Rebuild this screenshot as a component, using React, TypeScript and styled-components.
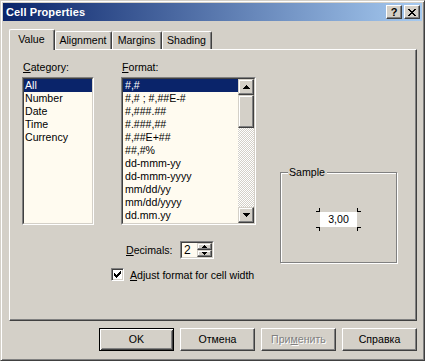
import React from "react";
import styled, { createGlobalStyle, css } from "styled-components";

const C = {
  face: "#d4d0c8",
  light: "#ffffff",
  shadow: "#808080",
  dark: "#404040",
  window: "#fffbf0",
  select: "#0a246a",
};

const GlobalStyle = createGlobalStyle`
  html, body { margin: 0; padding: 0; background: ${C.face}; }
  body {
    font-family: "Liberation Sans", Arial, sans-serif;
    font-size: 10.6px;
    color: #000;
  }
  * { box-sizing: border-box; }
`;

const raised = css`
  border: 1px solid;
  border-color: ${C.light} ${C.dark} ${C.dark} ${C.light};
  box-shadow: inset -1px -1px ${C.shadow}, inset 1px 1px ${C.face};
  background: ${C.face};
`;

const raisedSoft = css`
  border: 1px solid;
  border-color: ${C.face} ${C.dark} ${C.dark} ${C.face};
  box-shadow: inset -1px -1px ${C.shadow}, inset 1px 1px ${C.light};
  background: ${C.face};
`;

/* pixel glyphs */
const Pixels: React.FC<{ rows: string[]; color?: string }> = ({ rows, color = "#000" }) => (
  <svg
    width={rows[0].length}
    height={rows.length}
    viewBox={`0 0 ${rows[0].length} ${rows.length}`}
    shapeRendering="crispEdges"
    style={{ display: "block" }}
  >
    {rows.map((r, y) =>
      r.split("").map((ch, x) => (ch === "x" ? <rect key={`${x}-${y}`} x={x} y={y} width={1} height={1} fill={color} /> : null))
    )}
  </svg>
);

const closeGlyph = ["xx....xx", ".xx..xx.", "..xxxx..", "...xx...", "..xxxx..", ".xx..xx.", "xx....xx"];
const upGlyph = ["...x...", "..xxx..", ".xxxxx.", "xxxxxxx"];
const downGlyph = [...upGlyph].reverse();
const spinUp = ["..x..", ".xxx.", "xxxxx"];
const spinDown = [...spinUp].reverse();
const checkGlyph = ["......x", ".....xx", "x...xxx", "xx.xxx.", "xxxxx..", ".xxx...", "..x...."];

/* window frame */
const Window = styled.div`
  width: 425px;
  height: 361px;
  background: ${C.face};
  border: 1px solid;
  border-color: ${C.face} ${C.dark} ${C.dark} ${C.face};
  box-shadow: inset 1px 1px ${C.light}, inset -1px -1px ${C.shadow};
  padding: 2px;
  display: flex;
  flex-direction: column;
`;

const TitleBar = styled.div`
  height: 18px;
  background: linear-gradient(to right, ${C.select}, #a6caf0);
  display: flex;
  align-items: center;
  padding: 0 2px 0 3px;
  gap: 2px;
`;

const TitleText = styled.div`
  flex: 1;
  color: #fff;
  font-weight: bold;
  font-size: 11px;
  letter-spacing: 0.1px;
`;

const CaptionButton = styled.div`
  ${raised};
  width: 16px;
  height: 14px;
  display: flex;
  align-items: center;
  justify-content: center;
  font-weight: bold;
  font-size: 11px;
  line-height: 12px;
`;

const Body = styled.div`
  flex: 1;
  padding: 8px 5px 0 6px;
  display: flex;
  flex-direction: column;
`;

/* tabs */
const TabStrip = styled.div`
  height: 20px;
  display: flex;
  align-items: flex-end;
`;

const Tab = styled.div<{ $w: number; $active?: boolean }>`
  width: ${(p) => p.$w}px;
  height: ${(p) => (p.$active ? 21 : 18)}px;
  margin-bottom: ${(p) => (p.$active ? -1 : 0)}px;
  position: relative;
  z-index: ${(p) => (p.$active ? 2 : 1)};
  background: ${C.face};
  border-top: 1px solid ${C.light};
  border-left: 1px solid ${C.light};
  border-right: 1px solid ${C.dark};
  box-shadow: inset -1px 0 ${C.shadow};
  border-radius: 2px 2px 0 0;
  display: flex;
  justify-content: center;
  padding-top: ${(p) => (p.$active ? 3 : 2)}px;
  padding-right: 1px;
`;

const Panel = styled.div`
  height: 272px;
  border: 1px solid;
  border-color: ${C.light} ${C.dark} ${C.dark} ${C.light};
  box-shadow: inset -1px -1px ${C.shadow};
  padding: 11px 0 0 12px;
  display: flex;
  align-items: flex-start;
`;

const LeftArea = styled.div`
  display: flex;
  flex-direction: column;
`;

const ListsRow = styled.div`
  display: flex;
  gap: 27px;
`;

const Field = styled.div`
  display: flex;
  flex-direction: column;
`;

const Label = styled.div`
  line-height: 13px;
  height: 13px;
  margin-bottom: 3px;
  padding-left: 1px;
`;

const ListBox = styled.div<{ $w: number }>`
  width: ${(p) => p.$w}px;
  height: 148px;
  border: 1px solid;
  border-color: ${C.shadow} ${C.light} ${C.light} ${C.shadow};
`;

const ListInner = styled.div`
  height: 100%;
  border: 1px solid;
  border-color: ${C.dark} ${C.face} ${C.face} ${C.dark};
  background: ${C.window};
  display: flex;
`;

const Items = styled.div`
  flex: 1;
  overflow: hidden;
`;

const Item = styled.div<{ $sel?: boolean; $pad: number }>`
  height: 13px;
  line-height: 13px;
  padding-left: ${(p) => p.$pad}px;
  white-space: nowrap;
  background: ${(p) => (p.$sel ? C.select : "transparent")};
  color: ${(p) => (p.$sel ? "#fff" : "#000")};
`;

const ScrollBar = styled.div`
  width: 16px;
  display: flex;
  flex-direction: column;
`;

const ScrollButton = styled.div`
  ${raisedSoft};
  height: 16px;
  display: flex;
  align-items: center;
  justify-content: center;
`;

const Thumb = styled.div`
  ${raisedSoft};
  height: 33px;
`;

const Track = styled.div`
  flex: 1;
  background: repeating-conic-gradient(${C.face} 0 25%, ${C.light} 0 50%) 0 0 / 2px 2px;
`;

/* decimals spin */
const DecimalsRow = styled.div`
  margin-top: 16px;
  padding-left: 104px;
  display: flex;
  align-items: center;
`;

const RowLabel = styled.div`
  width: 54px;
  line-height: 13px;
`;

const SpinOuter = styled.div`
  width: 34px;
  height: 18px;
  border: 1px solid;
  border-color: ${C.shadow} ${C.light} ${C.light} ${C.shadow};
`;

const SpinInner = styled.div`
  height: 100%;
  border: 1px solid;
  border-color: ${C.dark} ${C.face} ${C.face} ${C.dark};
  background: ${C.window};
  display: flex;
`;

const SpinValue = styled.div`
  flex: 1;
  line-height: 14px;
  padding-left: 2px;
  font-size: 12px;
`;

const SpinButtons = styled.div`
  width: 15px;
  display: flex;
  flex-direction: column;
`;

const SpinButton = styled.div`
  ${raisedSoft};
  height: 7px;
  display: flex;
  align-items: center;
  justify-content: center;
`;

/* checkbox */
const CheckRow = styled.div`
  margin-top: 9px;
  padding-left: 89px;
  display: flex;
  align-items: center;
  gap: 6px;
`;

const CheckBox = styled.div`
  width: 13px;
  height: 13px;
  border: 1px solid;
  border-color: ${C.shadow} ${C.light} ${C.light} ${C.shadow};
  box-shadow: inset 1px 1px ${C.dark}, inset -1px -1px ${C.face};
  background: #fff;
  display: flex;
  align-items: center;
  justify-content: center;
`;

/* sample group */
const SampleGroup = styled.div`
  position: relative;
  margin-left: 24px;
  margin-top: 111px;
  width: 117px;
  height: 91px;
  border: 1px solid ${C.shadow};
  box-shadow: inset 1px 1px ${C.light}, 1px 1px ${C.light};
  display: flex;
  justify-content: center;
  padding-top: 35px;
`;

const Legend = styled.div`
  position: absolute;
  top: -7px;
  left: 7px;
  padding: 0 2px 0 1px;
  background: ${C.face};
  line-height: 13px;
`;

const SampleCell = styled.div`
  position: relative;
  width: 45px;
  height: 23px;
  padding: 4px;
`;

const Marks = styled.svg`
  position: absolute;
  left: 0;
  top: 0;
`;

const SampleBox = styled.div`
  position: relative;
  width: 37px;
  height: 15px;
  background: #fff;
  text-align: center;
  line-height: 15px;
`;

/* bottom buttons */
const ButtonRow = styled.div`
  margin-top: 7px;
  display: flex;
  justify-content: flex-end;
  gap: 6px;
`;

const PushButton = styled.div<{ $default?: boolean; $disabled?: boolean }>`
  width: 75px;
  height: 23px;
  background: ${C.face};
  display: flex;
  align-items: center;
  justify-content: center;
  padding-bottom: 1px;
  ${(p) =>
    p.$default
      ? css`
          border: 1px solid #000;
          box-shadow: inset 1px 1px ${C.light}, inset -1px -1px ${C.dark}, inset 2px 2px ${C.face}, inset -2px -2px ${C.shadow};
        `
      : raised}
  color: ${(p) => (p.$disabled ? C.shadow : "#000")};
  text-shadow: ${(p) => (p.$disabled ? `1px 1px ${C.light}` : "none")};
`;

const categories = ["All", "Number", "Date", "Time", "Currency"];
const formats = [
  "#,#",
  "#,# ; #,##E-#",
  "#,###.##",
  "#.###,##",
  "#,##E+##",
  "##,#%",
  "dd-mmm-yy",
  "dd-mmm-yyyy",
  "mm/dd/yy",
  "mm/dd/yyyy",
  "dd.mm.yy",
];
const tabs = [
  { label: "Value", w: 46, active: true },
  { label: "Alignment", w: 57 },
  { label: "Margins", w: 50 },
  { label: "Shading", w: 50 },
];

export default function App() {
  return (
    <>
      <GlobalStyle />
      <Window>
        <TitleBar>
          <TitleText>Cell Properties</TitleText>
          <CaptionButton>?</CaptionButton>
          <CaptionButton>
            <Pixels rows={closeGlyph} />
          </CaptionButton>
        </TitleBar>
        <Body>
          <TabStrip>
            {tabs.map((t) => (
              <Tab key={t.label} $w={t.w} $active={t.active}>
                {t.label}
              </Tab>
            ))}
          </TabStrip>
          <Panel>
            <LeftArea>
              <ListsRow>
                <Field>
                  <Label>
                    <u>C</u>ategory:
                  </Label>
                  <ListBox $w={72}>
                    <ListInner>
                      <Items>
                        {categories.map((c, i) => (
                          <Item key={c} $sel={i === 0} $pad={1}>
                            {c}
                          </Item>
                        ))}
                      </Items>
                    </ListInner>
                  </ListBox>
                </Field>
                <Field>
                  <Label>
                    <u>F</u>ormat:
                  </Label>
                  <ListBox $w={135}>
                    <ListInner>
                      <Items>
                        {formats.map((f, i) => (
                          <Item key={f} $sel={i === 0} $pad={2}>
                            {f}
                          </Item>
                        ))}
                      </Items>
                      <ScrollBar>
                        <ScrollButton>
                          <Pixels rows={upGlyph} />
                        </ScrollButton>
                        <Thumb />
                        <Track />
                        <ScrollButton>
                          <Pixels rows={downGlyph} />
                        </ScrollButton>
                      </ScrollBar>
                    </ListInner>
                  </ListBox>
                </Field>
              </ListsRow>
              <DecimalsRow>
                <RowLabel>
                  <u>D</u>ecimals:
                </RowLabel>
                <SpinOuter>
                  <SpinInner>
                    <SpinValue>2</SpinValue>
                    <SpinButtons>
                      <SpinButton>
                        <Pixels rows={spinUp} />
                      </SpinButton>
                      <SpinButton>
                        <Pixels rows={spinDown} />
                      </SpinButton>
                    </SpinButtons>
                  </SpinInner>
                </SpinOuter>
              </DecimalsRow>
              <CheckRow>
                <CheckBox>
                  <Pixels rows={checkGlyph} />
                </CheckBox>
                <span>
                  <u>A</u>djust format for cell width
                </span>
              </CheckRow>
            </LeftArea>
            <SampleGroup>
              <Legend>Sample</Legend>
              <SampleCell>
                <Marks width={45} height={23} shapeRendering="crispEdges">
                  <rect x={0} y={3} width={4} height={1} fill="#000" />
                  <rect x={3} y={0} width={1} height={4} fill="#000" />
                  <rect x={41} y={3} width={4} height={1} fill="#000" />
                  <rect x={41} y={0} width={1} height={4} fill="#000" />
                  <rect x={0} y={19} width={4} height={1} fill="#000" />
                  <rect x={3} y={19} width={1} height={4} fill="#000" />
                  <rect x={41} y={19} width={4} height={1} fill="#000" />
                  <rect x={41} y={19} width={1} height={4} fill="#000" />
                </Marks>
                <SampleBox>3,00</SampleBox>
              </SampleCell>
            </SampleGroup>
          </Panel>
          <ButtonRow>
            <PushButton $default>OK</PushButton>
            <PushButton>Отмена</PushButton>
            <PushButton $disabled>
              <span>
                При<u>м</u>енить
              </span>
            </PushButton>
            <PushButton>Справка</PushButton>
          </ButtonRow>
        </Body>
      </Window>
    </>
  );
}
